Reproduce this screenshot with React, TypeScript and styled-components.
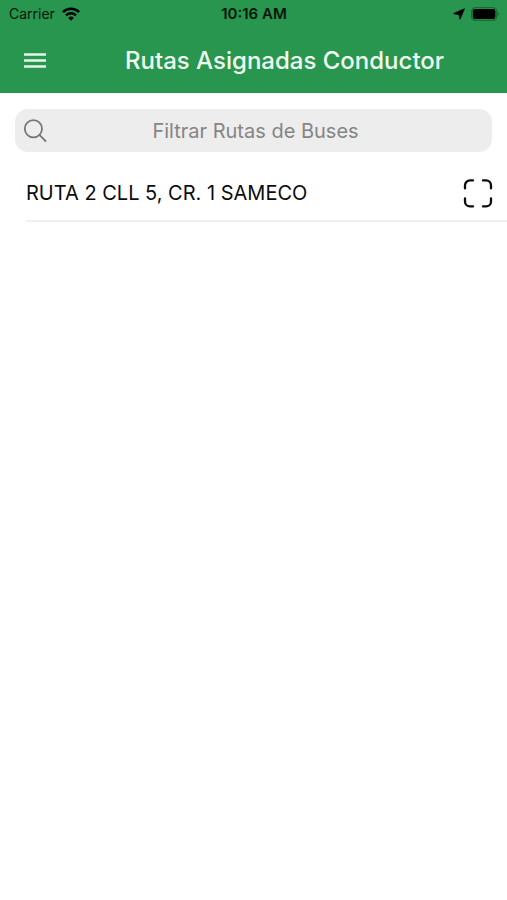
import React, { useState } from "react";
import styled, { createGlobalStyle } from "styled-components";

const GlobalStyle = createGlobalStyle`
  *, *::before, *::after { box-sizing: border-box; }
  body {
    margin: 0;
    background: #fff;
    color: #0c0c0c;
    font-family: Inter, "Liberation Sans", sans-serif;
  }
`;

const Page = styled.div`
  display: flex;
  flex-direction: column;
  min-height: 100vh;
`;

const Header = styled.header`
  background: #28964e;
`;

const StatusBar = styled.div`
  display: grid;
  grid-template-columns: 1fr auto 1fr;
  align-items: center;
  height: 28px;
  padding: 0 8px 0 9px;
  font-size: 14px;
  line-height: 20px;
  color: #04150a;
`;

const StatusGroup = styled.div<{ $end?: boolean }>`
  display: flex;
  align-items: center;
  gap: ${(p) => (p.$end ? "6px" : "7px")};
  justify-content: ${(p) => (p.$end ? "flex-end" : "flex-start")};
`;

const Clock = styled.time`
  font-size: 15px;
  font-weight: 600;
`;

const Toolbar = styled.div`
  display: flex;
  align-items: center;
  height: 65px;
  padding-left: 12px;
`;

const IconButton = styled.button`
  display: flex;
  align-items: center;
  justify-content: center;
  padding: 0;
  border: 0;
  background: none;
  color: inherit;
  cursor: pointer;
`;

const MenuButton = styled(IconButton)`
  width: 46px;
  height: 46px;
  color: #e6f8ea;
`;

const Title = styled.h1`
  flex: 1;
  margin: 0;
  padding-left: 4px;
  text-align: center;
  font-size: 24px;
  line-height: 32px;
  font-weight: 500;
  color: #f0fcf2;
`;

const SearchBox = styled.label`
  position: relative;
  display: block;
  margin: 16px 15px 0;
  color: #77777a;
`;

const SearchInput = styled.input`
  display: block;
  width: 100%;
  height: 43px;
  padding: 0 40px 0 44px;
  border: 0;
  border-radius: 13px;
  outline: 0;
  background: #ededed;
  color: #0c0c0c;
  font: inherit;
  font-size: 20px;
  text-align: center;

  &::placeholder { color: #858585; opacity: 1; }
`;

const SearchIcon = styled.svg`
  position: absolute;
  left: 8px;
  top: 10px;
`;

const RouteList = styled.ul`
  margin: 14px 0 0;
  padding: 0 0 0 26px;
  list-style: none;
`;

const RouteRow = styled.li`
  display: flex;
  align-items: center;
  justify-content: space-between;
  height: 56px;
  padding-right: 14px;
  border-bottom: 2px solid #efefef;
`;

const RouteName = styled.span`
  font-size: 20px;
  line-height: 28px;
`;

const routes = ["RUTA 2 CLL 5, CR. 1 SAMECO"];

function WifiIcon() {
  return (
    <svg width="18" height="14" viewBox="0 0 18 14" fill="none" stroke="#000" strokeWidth="2.5" aria-hidden="true">
      <path d="M.9 5.1a11.5 11.5 0 0 1 16.2 0" />
      <path d="M4 8.4a7.1 7.1 0 0 1 10 0" />
      <path d="M9 13.8 6.2 10.9a4 4 0 0 1 5.6 0Z" fill="#000" stroke="none" />
    </svg>
  );
}

function LocationIcon() {
  return (
    <svg width="12" height="12" viewBox="0 0 12 12" aria-hidden="true">
      <path d="M11.4.8 7 11.2 6 6.6.6 5.6Z" stroke="#000" strokeWidth=".9" strokeLinejoin="round" />
    </svg>
  );
}

function BatteryIcon() {
  return (
    <svg width="28" height="14" viewBox="0 0 28 14" aria-hidden="true">
      <rect x=".6" y=".6" width="25" height="12.8" rx="3.8" fill="none" stroke="#176b34" strokeWidth="1.2" />
      <rect x="1.8" y="2" width="22.6" height="10" rx="2.2" />
      <path d="M26.4 4.8c1.8.7 1.8 3.7 0 4.4Z" fill="#176b34" />
    </svg>
  );
}

export default function App() {
  const [query, setQuery] = useState("");
  const visible = routes.filter((r) => r.toLowerCase().includes(query.toLowerCase()));

  return (
    <Page>
      <GlobalStyle />
      <Header>
        <StatusBar>
          <StatusGroup>
            <span>Carrier</span>
            <WifiIcon />
          </StatusGroup>
          <Clock>10:16 AM</Clock>
          <StatusGroup $end>
            <LocationIcon />
            <BatteryIcon />
          </StatusGroup>
        </StatusBar>
        <Toolbar>
          <MenuButton type="button" aria-label="Abrir menú">
            <svg width="24" height="18" viewBox="0 0 24 18" stroke="currentColor" strokeWidth="2.4" aria-hidden="true">
              <path d="M1 2.5h22M1 8.5h22M1 14.5h22" />
            </svg>
          </MenuButton>
          <Title>Rutas Asignadas Conductor</Title>
        </Toolbar>
      </Header>
      <main>
        <SearchBox>
          <SearchIcon width="24" height="24" viewBox="0 0 24 24" fill="none" stroke="currentColor" strokeWidth="1.8" strokeLinecap="round" aria-hidden="true">
            <circle cx="10.4" cy="9.8" r="8.6" />
            <path d="m16.7 16.2 5.8 5.8" />
          </SearchIcon>
          <SearchInput
            type="text"
            aria-label="Filtrar Rutas de Buses"
            placeholder="Filtrar Rutas de Buses"
            value={query}
            onChange={(e) => setQuery(e.target.value)}
          />
        </SearchBox>
        <RouteList>
          {visible.map((route) => (
            <RouteRow key={route}>
              <RouteName>{route}</RouteName>
              <IconButton type="button" aria-label={`Escanear ${route}`}>
                <svg width="30" height="30" viewBox="0 0 30 30" fill="none" stroke="#0c0c0c" strokeWidth="2.3" strokeLinecap="round" aria-hidden="true">
                  <path d="M10 2.4H7a5 5 0 0 0-5 5v3M20 2.4h3a5 5 0 0 1 5 5v3M28 20.4v3a5 5 0 0 1-5 5h-3M10 28.4H7a5 5 0 0 1-5-5v-3" />
                </svg>
              </IconButton>
            </RouteRow>
          ))}
        </RouteList>
      </main>
    </Page>
  );
}
